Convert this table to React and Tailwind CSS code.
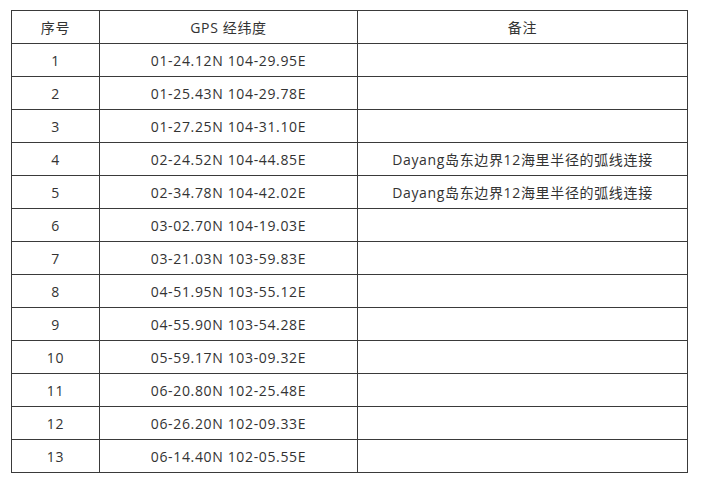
const rows = [
  ["1", "01-24.12N 104-29.95E", ""],
  ["2", "01-25.43N 104-29.78E", ""],
  ["3", "01-27.25N 104-31.10E", ""],
  ["4", "02-24.52N 104-44.85E", "Dayang岛东边界12海里半径的弧线连接"],
  ["5", "02-34.78N 104-42.02E", "Dayang岛东边界12海里半径的弧线连接"],
  ["6", "03-02.70N 104-19.03E", ""],
  ["7", "03-21.03N 103-59.83E", ""],
  ["8", "04-51.95N 103-55.12E", ""],
  ["9", "04-55.90N 103-54.28E", ""],
  ["10", "05-59.17N 103-09.32E", ""],
  ["11", "06-20.80N 102-25.48E", ""],
  ["12", "06-26.20N 102-09.33E", ""],
  ["13", "06-14.40N 102-05.55E", ""],
];

const cell = "border border-[#3a3a3a] text-center align-middle p-0";

export default function App() {
  return (
    <div
      className="w-[701px] h-[482px] bg-white pt-[10px] pl-[11px] text-[14px] tracking-[0.65px] text-[#333]"
      style={{ fontFamily: '"Open Sans", "Noto Sans CJK SC", sans-serif' }}
    >
      <table className="table-fixed border-collapse w-[677px]">
        <colgroup>
          <col className="w-[88px]" />
          <col className="w-[258px]" />
          <col />
        </colgroup>
        <thead>
          <tr className="h-[33px]">
            <th className={cell + " font-normal"}>序号</th>
            <th className={cell + " font-normal"}>GPS 经纬度</th>
            <th className={cell + " font-normal"}>备注</th>
          </tr>
        </thead>
        <tbody>
          {rows.map((r) => (
            <tr key={r[0]} className="h-[33px]">
              <td className={cell}>{r[0]}</td>
              <td className={cell}>{r[1]}</td>
              <td className={cell}>{r[2]}</td>
            </tr>
          ))}
        </tbody>
      </table>
    </div>
  );
}
